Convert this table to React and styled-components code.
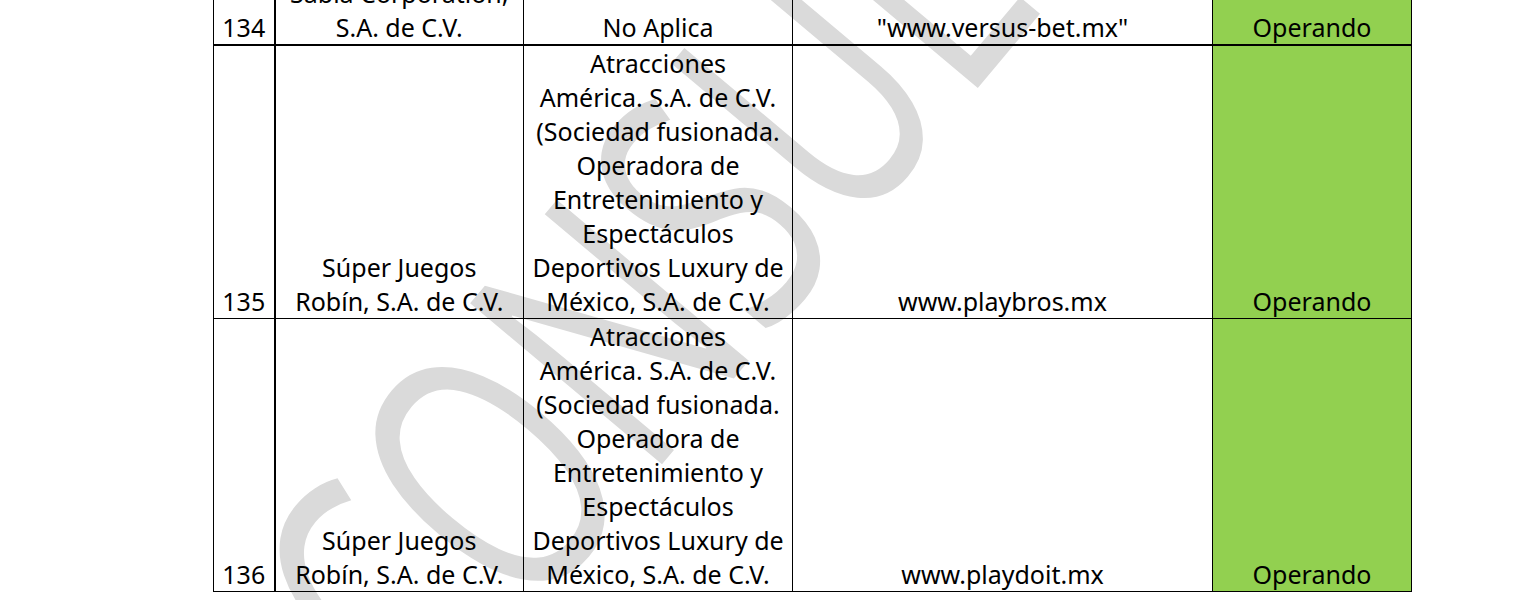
import styled, { createGlobalStyle } from 'styled-components';

const GlobalStyle = createGlobalStyle`
  html, body {
    margin: 0;
    padding: 0;
    background: #ffffff;
    overflow: hidden;
  }
`;

const Page = styled.div`
  position: relative;
  height: 600px;
  overflow: hidden;
  padding-left: 213px;
`;

const Sheet = styled.table`
  position: relative;
  z-index: 1;
  margin-top: -24px;
  border-collapse: collapse;
  table-layout: fixed;
  width: 1198px;
  font-family: 'Noto Sans', 'Open Sans', sans-serif;
  font-size: 25px;
  line-height: 34px;
  color: #000;
  background: transparent;
`;

const Col = styled.col`
  width: ${(p) => p.$w}px;
`;

const Row = styled.tr`
  border-bottom: ${(p) => (p.$heavy ? '2px' : '1px')} solid #000;
`;

const Cell = styled.td`
  border-left: 1px solid #000;
  border-right: ${(p) => (p.$heavy ? '2px' : '1px')} solid #000;
  padding: 0;
  text-align: center;
  vertical-align: bottom;
  white-space: nowrap;
  background: ${(p) => (p.$status ? '#92d050' : 'transparent')};
`;

const Line = styled.span`
  display: block;
`;

// marca de agua estirada, como el WordArt del documento original
const Watermark = styled.div`
  position: absolute;
  z-index: 0;
  left: 189px;
  top: 543px;
  transform: rotate(-50deg) scaleY(1.45);
  transform-origin: left top;
  font-family: 'Open Sans', 'Noto Sans', sans-serif;
  font-size: 242px;
  line-height: 1;
  color: #dadada;
  white-space: nowrap;
  pointer-events: none;
  user-select: none;
`;

const merged = [
  'Atracciones',
  'América. S.A. de C.V.',
  '(Sociedad fusionada.',
  'Operadora de',
  'Entretenimiento y',
  'Espectáculos',
  'Deportivos Luxury de',
  'México, S.A. de C.V.',
];

const rows = [
  {
    id: '134',
    name: ['Sabia Corporation,', 'S.A. de C.V.'],
    merged: ['No Aplica'],
    site: '"www.versus-bet.mx"',
    status: 'Operando',
    heavy: true,
  },
  {
    id: '135',
    name: ['Súper Juegos', 'Robín, S.A. de C.V.'],
    merged,
    site: 'www.playbros.mx',
    status: 'Operando',
  },
  {
    id: '136',
    name: ['Súper Juegos', 'Robín, S.A. de C.V.'],
    merged,
    site: 'www.playdoit.mx',
    status: 'Operando',
  },
];

const widths = [61, 249, 269, 420, 199];

const App = () => {
  return (
    <Page>
      <GlobalStyle />
      <Watermark>CONSULTA</Watermark>
      <Sheet>
        <colgroup>
          {widths.map((w, i) => (
            <Col key={i} $w={w} />
          ))}
        </colgroup>
        <tbody>
          {rows.map((row) => (
            <Row key={row.id} $heavy={row.heavy}>
              <Cell $heavy>{row.id}</Cell>
              <Cell>
                {row.name.map((l, i) => (
                  <Line key={i}>{l}</Line>
                ))}
              </Cell>
              <Cell>
                {row.merged.map((l, i) => (
                  <Line key={i}>{l}</Line>
                ))}
              </Cell>
              <Cell>{row.site}</Cell>
              <Cell $status>{row.status}</Cell>
            </Row>
          ))}
        </tbody>
      </Sheet>
    </Page>
  );
};

export default App;
